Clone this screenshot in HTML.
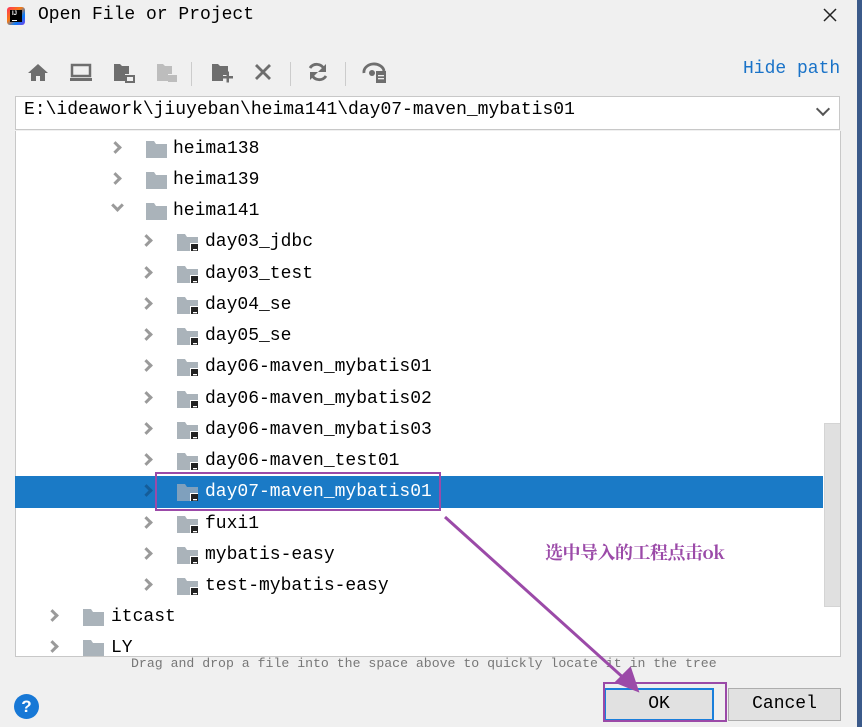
<!DOCTYPE html>
<html><head><meta charset="utf-8"><style>
*{margin:0;padding:0;box-sizing:border-box}
body{width:862px;height:727px;background:#f0f0f0;position:relative;overflow:hidden;font-family:"Liberation Mono",monospace;color:#000}
.a{position:absolute}
.row{position:absolute;left:15px;width:808px;height:31px}
.row .t{position:absolute;top:6px;font-size:18px;line-height:20px;white-space:nowrap}
.chev{position:absolute;top:10px;width:9px;height:9px;border-right:3px solid #9a9a9a;border-top:3px solid #9a9a9a;transform:rotate(45deg)}
.fold{position:absolute;top:8px;width:21px;height:17px}
</style></head><body>
<div class="a" style="right:0;top:0;width:5px;height:727px;background:#3b5a8a"></div>
<div class="a" style="left:7px;top:7px;width:18px;height:18px;background:linear-gradient(135deg,#fe315d,#f97a12 40%,#087cfa 70%,#7b3fe4);border-radius:3px"><div style="position:absolute;left:3px;top:3px;width:12px;height:12px;background:#000"></div><div style="position:absolute;left:5px;top:4px;color:#fff;font:bold 6px 'Liberation Sans',sans-serif">IJ</div><div style="position:absolute;left:5px;top:13px;width:5px;height:1px;background:#fff"></div></div>
<div class="a" style="left:38px;top:5px;font-size:18px">Open File or Project</div>
<svg class="a" style="left:823px;top:8px" width="14" height="14"><path d="M1 1 L13 13 M13 1 L1 13" stroke="#222" stroke-width="1.5"/></svg>
<svg class="a" style="left:20px;top:58px" width="380" height="30" viewBox="0 0 380 30">
<g fill="#6e6e6e">
<path d="M18 6 L28 15 L25 15 L25 23 L20 23 L20 18 L16 18 L16 23 L11 23 L11 15 L8 15Z"/>
<rect x="52" y="7" width="18" height="11" fill="none" stroke="#6e6e6e" stroke-width="2.5"/><rect x="50" y="20" width="22" height="3"/>
<path d="M94 6 h6 l2 2 h7 v8 h-4 v7 h-11z"/><rect x="106" y="18" width="8" height="6" fill="none" stroke="#6e6e6e" stroke-width="2"/>
<g fill="#bdbdbd"><path d="M137 6 h6 l2 2 h7 v8 h-4 v7 h-11z"/><rect x="148" y="17" width="9" height="7"/></g>
<rect x="171" y="4" width="1" height="24" fill="#ccc"/>
<path d="M192 6 h6 l2 2 h8 v9 h-5 v6 h-11z"/><rect x="202" y="18" width="11" height="2.5"/><rect x="206.5" y="13.5" width="2.5" height="11"/>
<path d="M236 7 L250 21 M250 7 L236 21" stroke="#6e6e6e" stroke-width="2.8"/>
<rect x="270" y="4" width="1" height="24" fill="#ccc"/>
<path d="M290 10 a8 8 0 0 1 14 1" fill="none" stroke="#6e6e6e" stroke-width="2.8"/><path d="M306 6 v8 h-8z"/>
<path d="M306 18 a8 8 0 0 1 -14 -1" fill="none" stroke="#6e6e6e" stroke-width="2.8"/><path d="M290 22 v-8 h8z"/>
<rect x="325" y="4" width="1" height="24" fill="#ccc"/>
<path d="M344 15 a10 8 0 0 1 20 -2" fill="none" stroke="#6e6e6e" stroke-width="2.8"/><circle cx="352" cy="15" r="3"/>
<rect x="356" y="13" width="10" height="12" fill="#6e6e6e"/><rect x="358" y="17" width="6" height="1.3" fill="#f0f0f0"/><rect x="358" y="20" width="6" height="1.3" fill="#f0f0f0"/>
</g></svg>
<div class="a" style="left:743px;top:59px;font-size:18px;color:#1a73c8">Hide path</div>
<div class="a" style="left:15px;top:96px;width:825px;height:34px;background:#fff;border:1px solid #c8c8c8"></div>
<div class="a" style="left:24px;top:100px;font-size:18px">E:\ideawork\jiuyeban\heima141\day07-maven_mybatis01</div>
<div class="a" style="left:818px;top:104px;width:10px;height:10px;border-right:2px solid #555;border-bottom:2px solid #555;transform:rotate(45deg)"></div>
<div class="a" style="left:15px;top:131px;width:826px;height:526px;background:#fff;border:1px solid #c8c8c8;border-top:none;overflow:hidden">
<div class="a" style="left:808px;top:292px;width:17px;height:184px;background:#e0e0e0;border:1px solid #d4d4d4"></div>
</div>
<div id="tree"></div>
<div class="a" style="left:131px;top:656px;font-size:13.2px;color:#777">Drag and drop a file into the space above to quickly locate it in the tree</div>
<div class="a" style="left:14px;top:694px;width:25px;height:25px;border-radius:50%;background:#1778d6;color:#fff;font:bold 17px 'Liberation Sans',sans-serif;text-align:center;line-height:25px">?</div>
<div class="a" style="left:604px;top:688px;width:110px;height:33px;background:#e1e1e1;border:2px solid #1a7fdb;font-size:18px;text-align:center;line-height:28px">OK</div>
<div class="a" style="left:728px;top:688px;width:113px;height:33px;background:#e1e1e1;border:1px solid #adadad;font-size:18px;text-align:center;line-height:30px">Cancel</div>
<div class="a" style="left:603px;top:682px;width:124px;height:40px;border:2px solid #9b4aa8"></div>
<div class="a" style="left:155px;top:472px;width:286px;height:39px;border:2px solid #9b4aa8"></div>
<div class="a" style="left:545px;top:539px;font:bold 18px 'Noto Serif CJK SC',serif;color:#9b4aa8;letter-spacing:-0.5px">选中导入的工程点击ok</div>
<svg class="a" style="left:0;top:0" width="862" height="727"><path d="M445 517 L637 690" stroke="#9b4aa8" stroke-width="3"/><path d="M637 690 L617 682 L630 669Z" fill="#9b4aa8" stroke="#9b4aa8" stroke-width="3"/></svg>
<script>
var rows=[[1,'heima138',0],[1,'heima139',0],[1,'heima141',0,1],[2,'day03_jdbc',1],[2,'day03_test',1],[2,'day04_se',1],[2,'day05_se',1],[2,'day06-maven_mybatis01',1],[2,'day06-maven_mybatis02',1],[2,'day06-maven_mybatis03',1],[2,'day06-maven_test01',1],[2,'day07-maven_mybatis01',1,0,1],[2,'fuxi1',1],[2,'mybatis-easy',1],[2,'test-mybatis-easy',1],[0,'itcast',0],[0,'LY',0]];
var h='';rows.forEach(function(r,i){var top=132.5+i*31.25;var lv=r[0];var cx=[37,100,131][lv],fx=[68,131,162][lv],tx=[96,158,190][lv];
if(i==16)top=632;
var sel=r[4];var cc=sel?'#155d99':'#9a9a9a';
h+='<div class="row" style="top:'+top+'px;'+(sel?'background:#1a7ac6;height:32px;':'')+(i==16?'height:24px;overflow:hidden;':'')+'">';
h+=r[3]?'<div class="chev" style="left:'+(cx-2)+'px;top:6px;border-color:'+cc+';transform:rotate(135deg)"></div>':'<div class="chev" style="left:'+(cx-4)+'px;border-color:'+cc+'"></div>';
var fc=sel?'#7fa0bd':'#aab3ba';
h+='<svg class="fold" style="left:'+fx+'px" viewBox="0 0 21 17"><path d="M0 0 h8 l2 3 h11 v14 h-21z" fill="'+fc+'"/>'+(r[2]?'<rect x="13" y="9" width="9" height="9" fill="#fff"/><rect x="14" y="10" width="8" height="8" fill="#222"/><rect x="16" y="15" width="4" height="1.3" fill="#fff"/>':'')+'</svg>';
h+='<div class="t" style="left:'+tx+'px;'+(sel?'color:#fff;':'')+'">'+r[1]+'</div></div>';});
document.getElementById('tree').innerHTML=h;
</script>
</body></html>
